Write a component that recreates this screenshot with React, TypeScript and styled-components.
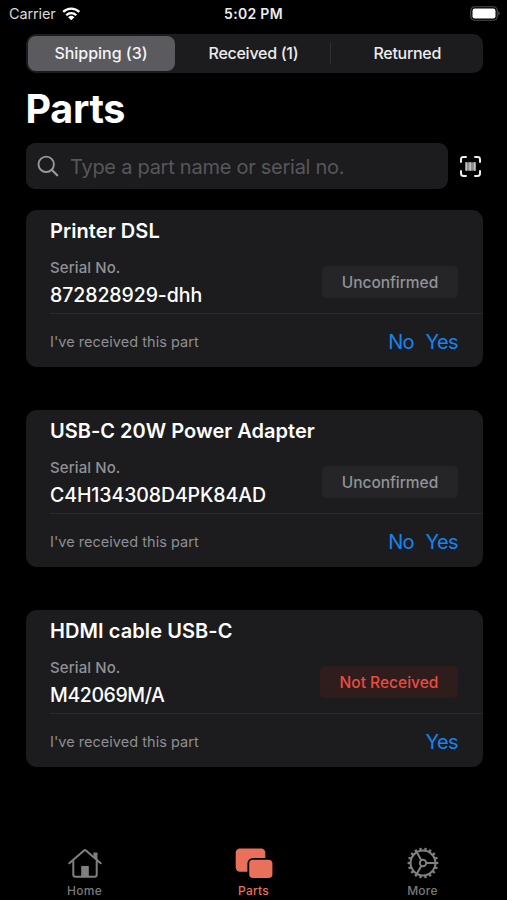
import React from "react";
import styled, { createGlobalStyle } from "styled-components";

const GlobalStyle = createGlobalStyle`
  * { box-sizing: border-box; }
  html, body { margin: 0; background: #000; }
  body { font-family: Inter, "Liberation Sans", sans-serif; overflow: hidden; }
  button { border: 0; background: none; padding: 0; margin: 0; font: inherit; color: inherit; }
`;

const Screen = styled.div`
  width: 507px;
  height: 900px;
  background: #000;
  color: #fff;
  display: flex;
  flex-direction: column;
  overflow: hidden;
`;

const StatusBar = styled.header`
  height: 27px;
  padding: 0 7px;
  display: grid;
  grid-template-columns: 1fr auto 1fr;
  align-items: center;
  flex: none;
`;

const Carrier = styled.div`
  padding-left: 2px;
  display: flex;
  align-items: center;
  gap: 6px;
  font-size: 14.5px;
  letter-spacing: -0.12px;
  color: #d8d8d8;
`;

const Clock = styled.div`
  font-size: 14px;
  font-weight: 600;
  letter-spacing: 0.3px;
  color: #ececec;
`;

const BatterySlot = styled.div`
  display: flex;
  justify-content: flex-end;
`;

const Content = styled.main`
  flex: 1;
  padding: 7px 24.5px 0 25.5px;
  display: flex;
  flex-direction: column;
`;

const Segmented = styled.div`
  height: 38.5px;
  padding: 2px;
  border-radius: 10px;
  background: #1c1c1e;
  display: grid;
  grid-template-columns: 147px 156.5px 1fr;
  align-items: center;
  flex: none;
`;

const Segment = styled.button<{ $active?: boolean; $divided?: boolean; $spacing: number; $inset?: number }>`
  height: 34.5px;
  padding-left: ${(p) => p.$inset ?? 0}px;
  border-radius: 8px;
  font-size: 16px;
  font-weight: 500;
  letter-spacing: ${(p) => p.$spacing}px;
  white-space: nowrap;
  color: ${(p) => (p.$active ? "#f4f4f4" : "#ececec")};
  background: ${(p) =>
    p.$active
      ? "#5b5b5f"
      : p.$divided
        ? "linear-gradient(#303033, #303033) right center / 1.5px 23px no-repeat"
        : "none"};
`;

const Title = styled.h1`
  margin: 12.5px 0 0;
  height: 48px;
  line-height: 48px;
  font-size: 39.5px;
  font-weight: 700;
  letter-spacing: -0.3px;
  flex: none;
`;

const SearchRow = styled.div`
  margin-top: 9.5px;
  display: flex;
  align-items: center;
  gap: 11px;
  flex: none;
`;

const SearchField = styled.div`
  width: 422px;
  height: 46.5px;
  border-radius: 9px;
  background: #1c1c1e;
  display: flex;
  align-items: center;
  padding-left: 11px;
  gap: 11.5px;
`;

const Placeholder = styled.span`
  padding-top: 1.5px;
  font-size: 20px;
  letter-spacing: -0.26px;
  color: #57575b;
  white-space: nowrap;
`;

const CardList = styled.div`
  margin-top: 21.4px;
  display: flex;
  flex-direction: column;
  gap: 43px;
`;

const Card = styled.article`
  height: 157px;
  border-radius: 11px;
  background: #1c1c1e;
  padding-left: 24.5px;
  display: flex;
  flex-direction: column;
`;

const CardBody = styled.div`
  height: 104px;
  padding-right: 24.5px;
  border-bottom: 1px solid #2a2a2c;
  display: flex;
  justify-content: space-between;
`;

const Details = styled.div`
  display: flex;
  flex-direction: column;
  white-space: nowrap;
`;

const PartName = styled.h2<{ $spacing: number }>`
  margin: 8px 0 0;
  font-size: 20px;
  line-height: 26px;
  font-weight: 600;
  letter-spacing: ${(p) => p.$spacing}px;
`;

const SerialLabel = styled.div`
  margin-top: 14px;
  font-size: 15px;
  line-height: 20px;
  font-weight: 500;
  letter-spacing: 0.1px;
  color: #929296;
`;

const SerialValue = styled.div<{ $spacing: number }>`
  margin-top: 4px;
  font-size: 19.5px;
  line-height: 26px;
  font-weight: 500;
  letter-spacing: ${(p) => p.$spacing}px;
`;

const Badge = styled.div<{ $alert: boolean }>`
  margin-top: 55.5px;
  padding-top: 1.5px;
  width: ${(p) => (p.$alert ? 138 : 136)}px;
  height: 32px;
  border-radius: 5px;
  display: flex;
  align-items: center;
  justify-content: center;
  font-size: 15.5px;
  font-weight: 500;
  letter-spacing: ${(p) => (p.$alert ? 0.02 : -0.05)}px;
  color: ${(p) => (p.$alert ? "#ee4a3e" : "#929296")};
  background: ${(p) => (p.$alert ? "#2f1d1e" : "#252527")};
`;

const CardFooter = styled.div`
  height: 53px;
  padding: 2px 24.5px 0 0;
  display: flex;
  align-items: center;
  justify-content: space-between;
`;

const Prompt = styled.span`
  font-size: 14.5px;
  letter-spacing: 0.03px;
  color: #8e8e92;
`;

const Actions = styled.div`
  display: flex;
  gap: 11.5px;
`;

const Action = styled.button`
  font-size: 20px;
  letter-spacing: -0.6px;
  color: #1684f0;
`;

const TabBar = styled.nav`
  height: 60px;
  display: grid;
  grid-template-columns: repeat(3, 1fr);
  flex: none;
`;

const Tab = styled.button<{ $active?: boolean }>`
  display: flex;
  flex-direction: column;
  align-items: center;
  gap: 2px;
  padding-top: 5px;
  font-size: 12px;
  line-height: 16px;
  font-weight: 500;
  letter-spacing: 0.25px;
  color: ${(p) => (p.$active ? "#e9705a" : "#7a7a7a")};
`;

const WifiIcon = () => (
  <svg width="18.5" height="13.5" viewBox="0 0 20 14" fill="none" stroke="#fff">
    <path d="M1.3 5A12.4 12.4 0 0 1 18.7 5" strokeWidth="2.5" />
    <path d="M4.6 8.6A7.7 7.7 0 0 1 15.4 8.6" strokeWidth="2.5" />
    <path d="M10 14L6.6 10.7Q10 7.8 13.4 10.7Z" fill="#fff" stroke="none" />
  </svg>
);

const BatteryIcon = () => (
  <svg width="30" height="15" viewBox="0 0 30 15" fill="none">
    <rect x="0.75" y="0.75" width="26.5" height="13.5" rx="4" stroke="#4c4c4c" strokeWidth="1.2" />
    <rect x="2.5" y="2.6" width="23" height="9.8" rx="2.2" fill="#fff" />
    <path d="M28.4 5.3Q30.8 7.5 28.4 9.7Z" fill="#5c5c5c" />
  </svg>
);

const SearchIcon = () => (
  <svg width="22" height="22" viewBox="0 0 22 22" fill="none" stroke="#98989c" strokeLinecap="round">
    <circle cx="9.2" cy="9.3" r="7.7" strokeWidth="1.9" />
    <path d="M14.9 15L20.2 20.2" strokeWidth="2.3" />
  </svg>
);

const ScanIcon = () => (
  <svg width="23" height="24" viewBox="0 -1 23 24" fill="none">
    <path
      d="M2 7V4.4Q2 2 4.4 2H7M16 2H18.6Q21 2 21 4.4V7M21 16V18.6Q21 21 18.6 21H16M7 21H4.4Q2 21 2 18.6V16"
      stroke="#eee"
      strokeWidth="2"
      strokeLinecap="round"
    />
    <rect x="6.5" y="7.3" width="10.2" height="8.4" fill="#8c8c8c" />
    <path d="M7.2 7.3V15.7M11.2 7.3V15.7M15.8 7.3V15.7" stroke="#c9c9c9" strokeWidth="1.4" />
  </svg>
);

const HomeIcon = () => (
  <svg width="36" height="36" viewBox="0 0 36 36" fill="none" stroke="#808080" strokeWidth="2" strokeLinecap="round" strokeLinejoin="round">
    <path d="M2.3 18.3L17.1 5.4Q18 4.6 18.9 5.4L33.7 18.3" />
    <path d="M6.3 16V29.6Q6.3 31.8 8.5 31.8H27.5Q29.7 31.8 29.7 29.6V16" />
    <path d="M27 11.5V8H29.9V14.5" fill="#808080" strokeWidth="1.2" />
    <rect x="14.2" y="21" width="7.6" height="10.5" fill="#808080" stroke="none" />
  </svg>
);

const PartsIcon = () => (
  <svg width="38" height="36" viewBox="0 0 38 36">
    <rect x="0.7" y="3.4" width="29.6" height="23.4" rx="4.2" fill="#e9705a" />
    <rect x="12.4" y="12.9" width="27" height="22" rx="5.6" fill="#000" />
    <rect x="14.2" y="14.7" width="23.2" height="18.3" rx="3.8" fill="#e9705a" />
  </svg>
);

const teeth = Array.from({ length: 18 }, (_, i) => i * 20);

const GearIcon = () => (
  <svg width="36" height="36" viewBox="0 0 36 36" fill="none" stroke="#808080">
    <circle cx="18" cy="18" r="12.4" strokeWidth="2" />
    {teeth.map((angle) => (
      <path key={angle} d="M18 5.4V2.6" strokeWidth="2.3" transform={`rotate(${angle + 10} 18 18)`} />
    ))}
    <circle cx="18" cy="18" r="3.2" strokeWidth="1.9" />
    <path d="M21.2 18H30M16.4 15.2L11.8 7.3M16.4 20.8L11.8 28.7" strokeWidth="2" />
  </svg>
);

type Part = {
  name: string;
  nameSpacing: number;
  serial: string;
  serialSpacing: number;
  status: string;
  alert: boolean;
  actions: string[];
};

const parts: Part[] = [
  { name: "Printer DSL", nameSpacing: 0.08, serial: "872828929-dhh", serialSpacing: -0.08, status: "Unconfirmed", alert: false, actions: ["No", "Yes"] },
  { name: "USB-C 20W Power Adapter", nameSpacing: 0.02, serial: "C4H134308D4PK84AD", serialSpacing: -0.1, status: "Unconfirmed", alert: false, actions: ["No", "Yes"] },
  { name: "HDMI cable USB-C", nameSpacing: 0.08, serial: "M42069M/A", serialSpacing: -0.4, status: "Not Received", alert: true, actions: ["Yes"] },
];

export default function App() {
  return (
    <>
      <GlobalStyle />
      <Screen>
        <StatusBar>
          <Carrier>
            Carrier
            <WifiIcon />
          </Carrier>
          <Clock>5:02 PM</Clock>
          <BatterySlot>
            <BatteryIcon />
          </BatterySlot>
        </StatusBar>
        <Content>
          <Segmented>
            <Segment $active $spacing={-0.03}>Shipping (3)</Segment>
            <Segment $divided $spacing={-0.27} $inset={1.5}>Received (1)</Segment>
            <Segment $spacing={-0.3} $inset={3}>Returned</Segment>
          </Segmented>
          <Title>Parts</Title>
          <SearchRow>
            <SearchField>
              <SearchIcon />
              <Placeholder>Type a part name or serial no.</Placeholder>
            </SearchField>
            <ScanIcon />
          </SearchRow>
          <CardList>
            {parts.map((part) => (
              <Card key={part.name}>
                <CardBody>
                  <Details>
                    <PartName $spacing={part.nameSpacing}>{part.name}</PartName>
                    <SerialLabel>Serial No.</SerialLabel>
                    <SerialValue $spacing={part.serialSpacing}>{part.serial}</SerialValue>
                  </Details>
                  <Badge $alert={part.alert}>{part.status}</Badge>
                </CardBody>
                <CardFooter>
                  <Prompt>I've received this part</Prompt>
                  <Actions>
                    {part.actions.map((label) => (
                      <Action key={label}>{label}</Action>
                    ))}
                  </Actions>
                </CardFooter>
              </Card>
            ))}
          </CardList>
        </Content>
        <TabBar>
          <Tab>
            <HomeIcon />
            Home
          </Tab>
          <Tab $active>
            <PartsIcon />
            Parts
          </Tab>
          <Tab>
            <GearIcon />
            More
          </Tab>
        </TabBar>
      </Screen>
    </>
  );
}
